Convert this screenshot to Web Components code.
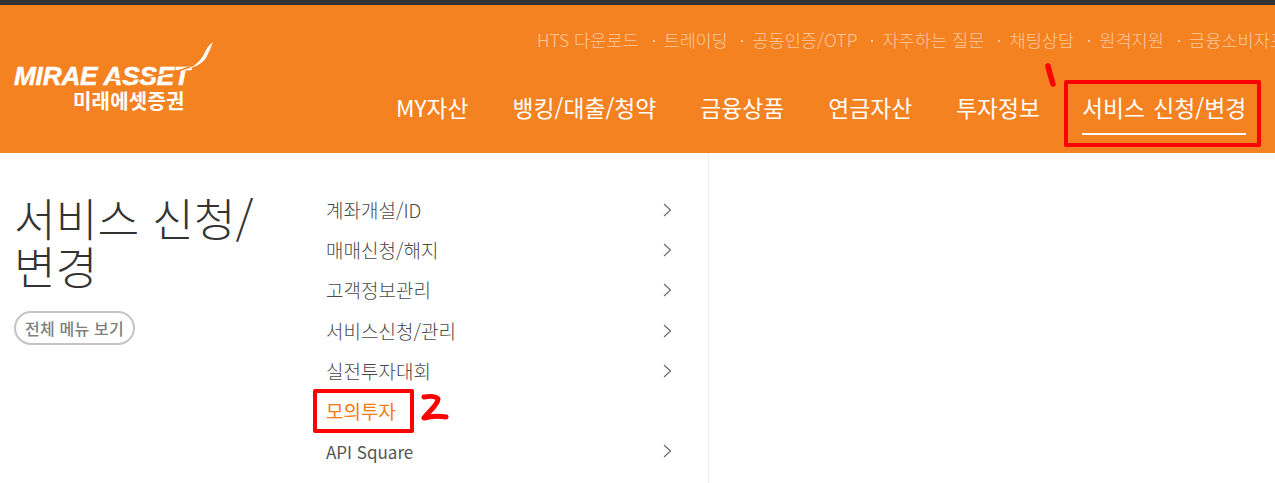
<!DOCTYPE html>
<html lang="ko">
<head>
<meta charset="utf-8">
<title>서비스 신청/변경</title>
<style>
  html, body { margin: 0; padding: 0; background: #fff; overflow: hidden; }
  body { width: 1275px; height: 483px; position: relative; font-family: "Noto Sans CJK KR", "Noto Sans", sans-serif; }
</style>
</head>
<body>
<site-header></site-header>
<site-body></site-body>
<ink-marks></ink-marks>

<script>
const FONT = `"Noto Sans CJK KR", "Noto Sans", sans-serif`;

class SiteLogo extends HTMLElement {
    constructor() {
        super();
        this.attachShadow({ mode: "open" });
    }

    connectedCallback() {
        this.shadowRoot.innerHTML = `
    <style>
      :host { display: block; position: relative; width: 205px; height: 76px; color: #fff; }
      .en { position: absolute; left: 0; top: 24px; font: italic 900 26.2px/24px "Liberation Sans", sans-serif; letter-spacing: -.2px; white-space: nowrap; -webkit-text-stroke: .5px #fff; }
      .ko { position: absolute; left: 59px; top: 51px; font: 700 20px/20px ${FONT}; letter-spacing: .2px; white-space: nowrap; }
      svg { position: absolute; left: 0; top: 0; }
    </style>
    <span class="en">MIRAE ASSET</span>
    <span class="ko">미래에셋증권</span>
    <svg width="205" height="76" viewBox="0 0 205 76">
      <path d="M97 38 C115 42 150 36 176 27" fill="none" stroke="#f58220" stroke-width="1.5"/>
      <path d="M199 2 C195 5 192 9 190 14 C187 20 182 25 176 28 C184 26 190 22 193 16 C195 12 197 7 199 2Z" fill="#fff"/>
    </svg>`;
    }
}

class TopLinks extends HTMLElement {
    constructor() {
        super();
        this.attachShadow({ mode: "open" });
    }

    connectedCallback() {
        const links = ["HTS 다운로드", "트레이딩", "공동인증/OTP", "자주하는 질문", "채팅상담", "원격지원", "금융소비자포털"];
        this.shadowRoot.innerHTML = `
    <style>
      :host { display: flex; gap: 14px; height: 24px; align-items: center; white-space: nowrap; font: 300 17.6px/24px "Liberation Sans Narrow", ${FONT}; color: #fbc99f; }
      span { display: inline-flex; align-items: center; gap: 9px; }
      span:first-child { letter-spacing: -.25px; margin-right: -1px; }
      span:nth-child(3) { letter-spacing: -.3px; }
      span + span::before { content: ""; width: 2px; height: 2px; background: #fbc99f; margin-top: 2px; }
    </style>
    ${links.map((l) => `<span>${l}</span>`).join("")}`;
    }
}

class MainNav extends HTMLElement {
    constructor() {
        super();
        this.attachShadow({ mode: "open" });
    }

    connectedCallback() {
        const items = ["MY자산", "뱅킹/대출/청약", "금융상품", "연금자산", "투자정보", "서비스 신청/변경"];
        this.shadowRoot.innerHTML = `
    <style>
      :host { display: flex; gap: 44px; white-space: nowrap; font: 400 22.8px/28px ${FONT}; color: #fff; word-spacing: 2px; }
      a { display: block; height: 28px; padding-bottom: 11px; }
      a.on { border-bottom: 2px solid #fff; margin-left: -2px; }
    </style>
    ${items.map((t, i) => `<a class="${i === items.length - 1 ? "on" : ""}">${t}</a>`).join("")}`;
    }
}

class SiteHeader extends HTMLElement {
    constructor() {
        super();
        this.attachShadow({ mode: "open" });
    }

    connectedCallback() {
        this.shadowRoot.innerHTML = `
    <style>
      :host { display: flex; height: 148px; background: #f58220; border-top: 5px solid #333; overflow: hidden; position: relative; }
      site-logo { margin: 35px 0 0 14px; flex: none; }
      .right { flex: none; display: flex; flex-direction: column; }
      top-links { margin: 23px 0 0 318px; }
      main-nav { margin: 42px 0 0 177px; }
    </style>
    <site-logo></site-logo>
    <div class="right">
      <top-links></top-links>
      <main-nav></main-nav>
    </div>`;
    }
}

class SideMenu extends HTMLElement {
    constructor() {
        super();
        this.attachShadow({ mode: "open" });
    }

    connectedCallback() {
        const items = [["계좌개설/ID", 1], ["매매신청/해지", 1], ["고객정보관리", 1], ["서비스신청/관리", 1], ["실전투자대회", 1], ["모의투자", 0], ["<small>API Square</small>", 1]];
        const chev = `<svg width="9" height="14" viewBox="0 0 9 14"><path d="M1 1l6.5 6L1 13" fill="none" stroke="#666" stroke-width="1.1"/></svg>`;
        this.shadowRoot.innerHTML = `
    <style>
      :host { display: block; width: 346px; font: 300 19px/40px ${FONT}; color: #4a4a4a; }
      div { display: flex; justify-content: space-between; align-items: center; height: 40.2px; }
      div.on { color: #f57a10; font-weight: 400; }
      span { margin-top: -2px; }
      svg { display: block; margin-top: -2px; }
      small { font-size: 17px; font-weight: 400; color: #555; }
    </style>
    ${items.map(([t, c]) => `<div class="${c ? "" : "on"}"><span>${t}</span>${c ? chev : ""}</div>`).join("")}`;
    }
}

class SiteBody extends HTMLElement {
    constructor() {
        super();
        this.attachShadow({ mode: "open" });
    }

    connectedCallback() {
        this.shadowRoot.innerHTML = `
    <style>
      :host { display: flex; height: 330px; overflow: hidden; }
      .title { flex: none; width: 312px; box-sizing: border-box; padding: 40px 0 0 14px; }
      h1 { margin: 0; width: 250px; font: 300 45.4px/48px ${FONT}; color: #333; }
      button { display: block; margin: 22px 0 0 0; width: 121px; height: 34px; box-sizing: border-box; border: 2px solid #c4c4c4; border-radius: 17px; background: #fff; padding: 0; font: 500 16px/28px ${FONT}; letter-spacing: .2px; color: #808080; }
      side-menu { flex: none; margin: 38px 0 0 14px; }
      .line { flex: none; width: 1px; background: #eee; margin-left: 36px; }
    </style>
    <div class="title">
      <h1>서비스 신청/변경</h1>
      <button>전체 메뉴 보기</button>
    </div>
    <side-menu></side-menu>
    <div class="line"></div>`;
    }
}

// red marker annotations painted over the screenshot
class InkMarks extends HTMLElement {
    constructor() {
        super();
        this.attachShadow({ mode: "open" });
    }

    connectedCallback() {
        this.shadowRoot.innerHTML = `
    <style>
      :host { position: absolute; inset: 0; display: block; pointer-events: none; }
      .box { position: absolute; box-sizing: border-box; border: 4px solid #f00; border-radius: 2px; }
      svg { position: absolute; left: 0; top: 0; }
    </style>
    <div class="box" style="left:1064px;top:80px;width:197px;height:67px"></div>
    <div class="box" style="left:313px;top:389px;width:101px;height:44px"></div>
    <svg width="1275" height="483" fill="none" stroke="#f00" stroke-linecap="round" stroke-linejoin="round">
      <path d="M1048 66 L1050 74 L1053 84" stroke-width="5.5"/>
      <path d="M424 397 C430 396 436 396 438 399 C438 405 428 412 424 418 C431 416 440 416 446 417" stroke-width="5"/>
    </svg>`;
    }
}

customElements.define("site-logo", SiteLogo);
customElements.define("top-links", TopLinks);
customElements.define("main-nav", MainNav);
customElements.define("site-header", SiteHeader);
customElements.define("side-menu", SideMenu);
customElements.define("site-body", SiteBody);
customElements.define("ink-marks", InkMarks);
</script>
</body>
</html>
